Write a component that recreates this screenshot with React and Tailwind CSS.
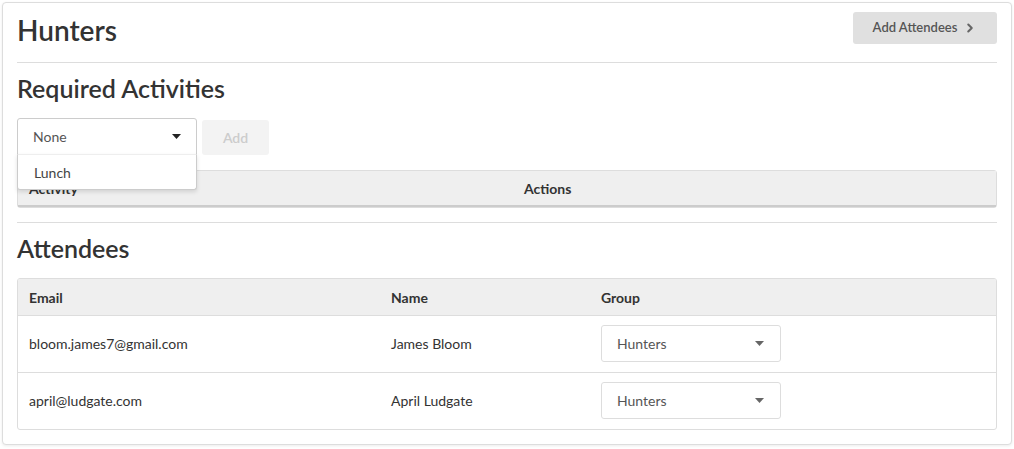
import { ChevronRight } from "lucide-react";

const attendees = [
  { email: "bloom.james7@gmail.com", name: "James Bloom", group: "Hunters" },
  { email: "april@ludgate.com", name: "April Ludgate", group: "Hunters" },
];

function Caret({ className = "" }) {
  return (
    <svg width="9" height="5" viewBox="0 0 9 5" className={className}>
      <path d="M0 0 L9 0 L4.5 5 Z" fill="currentColor" />
    </svg>
  );
}

function GroupSelect({ value }) {
  return (
    <div className="flex h-[37px] w-[180px] items-center justify-between rounded-[3px] border border-[#ddd] bg-white pl-[15px] pr-[16px] text-[14px] text-[#555]">
      <span>{value}</span>
      <Caret className="text-[#666]" />
    </div>
  );
}

export default function App() {
  return (
    <div
      className="min-h-[449px] bg-white pl-[2px] pt-[2px]"
      style={{ fontFamily: "Lato, 'Open Sans', sans-serif" }}
    >
      <div className="w-[1010px] rounded-[4px] border border-[#ddd] bg-white px-[14px] pb-[14px] pt-[9px] text-[#333] shadow-[0_1px_3px_rgba(0,0,0,0.08)]">
        <div className="flex items-start justify-between">
          <h1 className="mt-[1px] text-[28px] leading-[34px] font-semibold text-[#333]">Hunters</h1>
          <button className="flex h-[32px] w-[144px] items-center justify-center gap-[6px] rounded-[3px] bg-[#e0e0e0] text-[13px] font-semibold text-[#555]">
            Add Attendees
            <ChevronRight size={14} strokeWidth={3.5} className="text-[#666]" />
          </button>
        </div>

        <div className="mt-[15px] border-t border-[#ddd]" />

        <h2 className="mt-[11px] text-[25px] leading-[29px] font-semibold">Required Activities</h2>

        <div className="mt-[15px] flex items-start gap-[5px]">
          <div className="relative">
            <div className="flex h-[37px] w-[180px] items-center justify-between rounded-t-[3px] border border-[#ccc] bg-white pl-[15px] pr-[15px] text-[14px] text-[#555]">
              <span>None</span>
              <Caret className="text-[#222]" />
            </div>
            <div className="absolute left-0 top-[36px] z-10 w-[180px] rounded-b-[3px] border border-t-[#eee] border-[#ccc] bg-white shadow-[0_2px_4px_rgba(0,0,0,0.12)]">
              <div className="flex h-[34px] items-center pl-[16px] text-[14px] text-[#444]">Lunch</div>
            </div>
          </div>
          <button className="mt-[2px] h-[35px] w-[67px] rounded-[3px] bg-[#f3f3f3] text-[14px] font-semibold text-[#ccc]">
            Add
          </button>
        </div>

        <div className="mt-[15px] rounded-[3px] border border-[#ddd]">
          <div className="grid h-[36px] grid-cols-[494px_1fr] items-center border-b-2 border-[#ccc] bg-[#efefef] text-[14px] font-bold text-[#333]">
            <div className="pl-[11px]">Activity</div>
            <div className="pl-[12px]">Actions</div>
          </div>
        </div>

        <div className="mt-[14px] border-t border-[#ddd]" />

        <h2 className="mt-[11px] text-[25px] leading-[29px] font-semibold">Attendees</h2>

        <div className="mt-[15px] overflow-hidden rounded-[3px] border border-[#ddd]">
          <div className="grid h-[37px] grid-cols-[361px_210px_1fr] items-center border-b border-[#ddd] bg-[#efefef] text-[14px] font-bold text-[#333]">
            <div className="pl-[11px]">Email</div>
            <div className="pl-[12px]">Name</div>
            <div className="pl-[12px]">Group</div>
          </div>
          {attendees.map((a, idx) => (
            <div
              key={a.email}
              className={`grid grid-cols-[361px_210px_1fr] items-center pb-[1px] text-[14px] text-[#333] ${
                idx < attendees.length - 1 ? "h-[57px] border-b border-[#ddd]" : "h-[56px]"
              }`}
            >
              <div className="pl-[11px]">{a.email}</div>
              <div className="pl-[12px]">{a.name}</div>
              <div className="pl-[12px]">
                <GroupSelect value={a.group} />
              </div>
            </div>
          ))}
        </div>
      </div>
    </div>
  );
}
